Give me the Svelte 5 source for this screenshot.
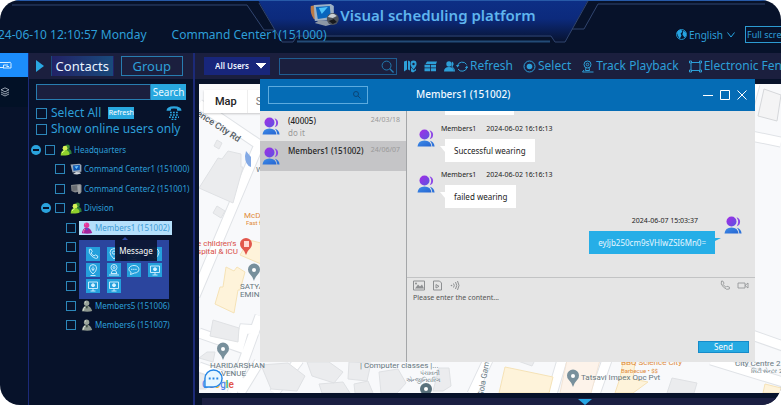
<script>
  const tree = [
    { level: 0, icon: 'group', label: 'Headquarters', open: true },
    { level: 1, icon: 'pc', label: 'Command Center1 (151000)' },
    { level: 1, icon: 'pcoff', label: 'Command Center2 (151001)' },
    { level: 1, icon: 'group', label: 'Division', open: true },
    { level: 2, icon: 'hot', label: 'Members1 (151002)', selected: true },
    { level: 2 },
    { level: 2 },
    { level: 2 },
    { level: 2, icon: 'off', label: 'Members5 (151006)' },
    { level: 2, icon: 'off', label: 'Members6 (151007)' }
  ];
  const actions = ['phone', 'pin', 'mic', 'pin', 'mic', 'person', 'chat', 'screen', 'screen', 'screen'];
  const threads = [
    { name: '(40005)', date: '24/03/18', last: 'do it' },
    { name: 'Members1 (151002)', date: '24/06/07', last: '', active: true }
  ];
  const messages = [
    { time: '2024-06-02 16:16:13', text: 'Successful wearing' },
    { time: '2024-06-02 16:16:13', text: 'failed wearing' }
  ];
  const roads =
    'M59 63L-4 212M0 249l40 14 5-18 15 1M33 309l28-77M0 20l62 42M60 278L41 309M100 276L75 309M0 283l47 17M289 276l-16 34M363 276l-10 34M408 276l-12 34M556 0l-24 90M582 58l-40-8M550 250l34 12M512 276l72 22';
</script>

{#snippet avatar()}
  <svg class="avatar" viewBox="0 0 18 18" aria-hidden="true">
    <defs>
      <linearGradient id="head" x1="0" y1="0" x2="1" y2="1">
        <stop offset="0" stop-color="#a52be6" /><stop offset="1" stop-color="#5a55e0" />
      </linearGradient>
      <linearGradient id="torso" x1="0" y1="0" x2="1" y2="1">
        <stop offset="0" stop-color="#3f8de8" /><stop offset="1" stop-color="#2565d2" />
      </linearGradient>
    </defs>
    <circle cx="7.5" cy="5.5" r="5" fill="url(#head)" />
    <path d="M12.5 1.2q3.6 1 3.6 4.5t-3.4 4.5q3-4.4-.2-9z" fill="#8d48e6" />
    <path d="M.5 17.5q.6-6 7-6t7 6z" fill="url(#torso)" />
    <path d="M13 11.8q4 1 4.6 5.7h-2.2q-.2-3.3-2.4-5.7z" fill="#2d73da" />
  </svg>
{/snippet}

{#snippet treeIcon(kind)}
  <svg class="tree-icon" viewBox="0 0 12 12" aria-hidden="true">
    {#if kind === 'group'}
      <circle cx="7.5" cy="3" r="2.4" fill="#3c8a35" /><path d="M4 10q0-5 4-5t3.5 5z" fill="#2f7f38" />
      <circle cx="5" cy="4.2" r="2.4" fill="#d7f255" /><path d="M.7 11.5q0-5.5 4.3-5.5t4.6 4.5q-2 1.3-8.9 1z" fill="#8fd02c" />
      <path d="M2.3 9q.5-2.2 2.5-2.3" stroke="#e6ff8a" fill="none" />
    {:else if kind === 'pc'}
      <path d="M.5 1.5l9-.8 1.9 1.2v6.8L2.5 9.5z" fill="#9aa6b5" />
      <path d="M3 2.6l6.8-.5v5l-6.3.6z" fill="#0b56b5" /><path d="M4.5 3.6l4-.6-2 3z" fill="#71c8ff" />
      <path d="M3 11l3-2 4 .2 1 1.3-4 1z" fill="#d3d8de" />
    {:else if kind === 'pcoff'}
      <path d="M1 2l9-1 1.5 1v7L10 11H8V9L5 9.500 1.500 8z" fill="#85888c" />
      <path d="M2 3l5-.5v5L2.500 8z" fill="#6a6d72" /><path d="M7.500 2.500l3-.5v7.500l-2 .5z" fill="#a3a5a8" />
    {:else}
      <circle cx="5.600" cy="3.200" r="2.700" fill={kind === 'hot' ? '#e2379b' : '#9aa49b'} />
      <path d="M.8 11.300q.8-5.600 4.800-5.600t5.600 5.300q-3.200 1.200-10.400.3z" fill={kind === 'hot' ? '#a3249b' : '#8d978e'} />
      <path d="M4.500 6.200L6 9l1-2.800z" fill={kind === 'hot' ? '#4752d9' : '#304238'} />
      <path d="M2.500 10.500q0-2.500 1.600-3.500M4 2.400l1-.8" stroke={kind === 'hot' ? '#ff75b4' : '#e6eee3'} fill="none" />
    {/if}
  </svg>
{/snippet}

{#snippet actionIcon(kind)}
  <svg viewBox="0 0 14 14" fill="none" stroke="#d9f3ff" stroke-width="0.9" aria-hidden="true">
    {#if kind === 'phone'}
      <path d="M3.4 2.4l1.7-.2 1.2 2.6-1.2 1.1q1 2 3 3.1l1.2-1.2 2.5 1.3-.3 1.9Q10 12.3 6 9.3 2 5.6 3.4 2.4z" />
    {:else if kind === 'pin'}
      <path d="M7 12Q3 8 3 5.6a4 4 0 0 1 8 0Q11 8 7 12z" /><circle cx="7" cy="5.6" r="1.6" />
    {:else if kind === 'mic'}
      <path d="M7 11Q3.4 8 3.4 5.2a3.6 3.6 0 0 1 7.2 0Q10.6 8 7 11zM7 3.5v4M5.5 5.5l1.5 2 1.5-2M4.5 12.500h5" />
    {:else if kind === 'person'}
      <circle cx="7" cy="4.5" r="3" /><circle cx="7" cy="4.5" r="1" /><path d="M5.5 7.5L4 10.5h6L8.5 7.5M2 12h10" />
    {:else if kind === 'chat'}
      <path d="M7 2.5c6.5 0 6.5 7.5.5 7.5l-4 1.5.6-2.2C0 7 2 2.5 7 2.5z" /><path d="M4 6.3h6" stroke-dasharray="1.5 .6" />
    {:else}
      <path d="M2.5 3h9v6.500h-9zM4.500 12h5M7 9.500V12" /><circle cx="7" cy="6.200" r="1.500" fill="#d9f3ff" />
    {/if}
  </svg>
{/snippet}

{#snippet place(x, y)}
  <g transform="translate({x} {y})">
    <path d="M0 0q-1-4-4.500-7.500a6 6 0 1 1 9 0Q1 -4 0 0z" fill="#78909c" /><circle cy="-11" r="2" fill="#fff" />
  </g>
{/snippet}

<div class="app">
  <header>
    <svg class="frame" viewBox="0 0 781 53" preserveAspectRatio="none" aria-hidden="true">
      <defs>
        <linearGradient id="banner" x1="0" y1="0" x2="0" y2="1">
          <stop offset="0" stop-color="#0d2f86" /><stop offset=".45" stop-color="#0c2a7c" /><stop offset="1" stop-color="#08132f" />
        </linearGradient>
      </defs>
      <path d="M258 0H588L565 42H555L551 37H297L293 42H282z" fill="url(#banner)" />
      <path d="M0 .5H781" stroke="#275aa8" />
      <g fill="none" stroke="#31456f">
        <path d="M12 5H247L264 30H275M259 3L282 42H293L297 36H551L555 42H565L588 1M572 29H584L598 4H765" />
        <path d="M297 41.5H550" stroke="#234b76" stroke-width="2" />
      </g>
    </svg>
    <time class="clock">24-06-10 12:10:57 Monday</time>
    <span class="center">Command Center1(151000)</span>
    <h1>
      <svg viewBox="0 0 30 22" aria-hidden="true">
        <path d="M1 2q-1 7 3 13l6 2L7 1z" fill="#bb7a45" />
        <path d="M4 1l17-1 3 2v12l-3 2-16 1z" fill="#9db0c4" />
        <path d="M6 3l14-1 1 11-13 2z" fill="#0865bd" /><path d="M9 4l9-1-6 7z" fill="#4ec3fa" />
        <path d="M5 19l5-3 12 1 1 3-7 2z" fill="#8d97a5" />
        <circle cx="23" cy="15" r="6" fill="#4d525a" /><path d="M18 13q4-6 9-1l-4 2z" fill="#cbd0d4" /><path d="M19 17l5-2 3 3-4 2z" fill="#17191e" />
      </svg>
      Visual scheduling platform
    </h1>
    <div class="head-tools">
      <button class="lang">
        <svg viewBox="0 0 12 12" aria-hidden="true"><circle cx="6" cy="6" r="5.4" fill="none" stroke="#26a5e3" /><path d="M1 4q2-4 5-3l1 2-2 2 1 2-2 4-2-4zM8 2l3 2v4L9 9 7 6z" fill="#26a5e3" /></svg>
        English
        <svg class="chev" viewBox="0 0 8 6" aria-hidden="true"><path d="M.5.5L4 5 7.5.5" fill="none" stroke="#26a5e3" /></svg>
      </button>
      <button class="full">Full screen</button>
    </div>
  </header>

  <div class="body">
    <nav aria-label="Main">
      <button class="on" aria-label="Dispatch"><svg viewBox="0 0 12 10" fill="none" stroke="#d8efff" aria-hidden="true"><path d="M0 2.500h8M0 7.500h3.500M3.500 8.500V5H8M8 2.500q3-1 3 1V8H4M6.500 6.500H9" /></svg></button>
      <button aria-label="Layers"><svg viewBox="0 0 12 10" fill="none" stroke="#bac5d0" stroke-width=".8" aria-hidden="true"><path d="M5 .8l4 2-4 2-4-2zM1 5l4 2 4-2M1 7l4 2 4-2" /></svg></button>
    </nav>

    <aside>
      <div class="tabs">
        <svg viewBox="0 0 8 12" aria-hidden="true"><path d="M0 0l8 6-8 6z" fill="#2aa8e2" /></svg>
        <button class="tab active">Contacts</button>
        <button class="tab">Group</button>
      </div>
      <form class="find">
        <input type="search" aria-label="Search contacts" /><button type="button">Search</button>
      </form>
      <div class="opts">
        <div class="opt">
          <label><input type="checkbox" />Select All</label>
          <button class="mini">Refresh</button>
          <svg class="dial" viewBox="0 0 16 14" aria-hidden="true">
            <path d="M.5 4.8q0-4.500 7.500-4.500t7.500 4.500h-4.200l-.5-2.100q-2.800-.6-5.600 0l-.5 2.100z" fill="#2ba5de" />
            <path d="M4 6.500h8M4 9h8M3 11.300h10M5.500 13.500h5" stroke="#2ba5de" stroke-width="1.400" stroke-dasharray="1.800 1.200" />
          </svg>
        </div>
        <label><input type="checkbox" />Show online users only</label>
      </div>
      <div class="tree">
        {#each tree as node, i}
          <div class="node l{node.level}">
            {#if node.open}<button class="fold" aria-label="Collapse {node.label}"></button>{/if}
            {#if node.label}
              <label>
                <input type="checkbox" />
                <span class:selected={node.selected} class="name">{@render treeIcon(node.icon)}{node.label}</span>
              </label>
            {:else}
              <input type="checkbox" aria-label="Contact {i}" />
            {/if}
          </div>
        {/each}
        <div class="actions">
          {#each actions as a, i}
            <button aria-label="Action {i + 1}">{@render actionIcon(a)}</button>
          {/each}
          <span class="tip" role="tooltip">Message</span>
        </div>
      </div>
    </aside>

    <main>
      <div class="toolbar">
        <select aria-label="User filter"><option>All Users</option></select>
        <label class="box">
          <input type="search" aria-label="Search map" />
          <svg viewBox="0 0 14 14" fill="none" stroke="#237eb5" aria-hidden="true"><circle cx="6" cy="6" r="4.8" /><path d="M9.500 9.500L13.500 13.500" stroke-width="1.400" /></svg>
        </label>
        <button aria-label="Map points" class="solo"><svg viewBox="0 0 13 12" aria-hidden="true"><path d="M0 1l3-1v9l-3 2zM4 0l2 1v9L4 9zM7 7l2 2 1 1 2-2v2l-3 2-2-1z" fill="#2d9fd8" /><path d="M9.500 9Q6 5 6.500 3a3 3 0 0 1 6 0Q13 5 9.500 9z" fill="#2d9fd8" /><circle cx="9.500" cy="3.500" r="1.200" fill="#1b1f3e" /></svg></button>
        <button aria-label="Grid" class="solo"><svg viewBox="0 0 13 12" aria-hidden="true"><path d="M3 1h10l-1 2.500H1.500zM.500 4.300H6v2.600H.500zM6.800 4.300H12v2.600H6.800zM.500 7.700H6v3H.500zM6.800 7.700H12v3H6.800z" fill="#2d9fd8" /></svg></button>
        <button><svg class="wide" viewBox="0 0 24 12" aria-hidden="true"><circle cx="5" cy="3.500" r="2.700" fill="#2d9fd8" /><path d="M0 11q0-4.500 5-4.500t5 4.500z" fill="#2d9fd8" /><path d="M8 1q3 2 .5 5 2 1.500 2.500 5h-1q0-3-2.500-5z" fill="#2d9fd8" /><path d="M13.500 5A5 5 0 0 1 22.500 4M23 7A5 5 0 0 1 14 8.500" fill="none" stroke="#2d9fd8" /><path d="M12 4.500h3.500l-2 2.500zM20.800 7.500h3.200l-1-2.500z" fill="#2d9fd8" /></svg>Refresh</button>
        <button><svg viewBox="0 0 13 12" aria-hidden="true"><circle cx="6.500" cy="6" r="5.500" fill="none" stroke="#2d9fd8" /><circle cx="6.500" cy="6" r="2.800" fill="#2d9fd8" /></svg>Select</button>
        <button><svg viewBox="0 0 13 12" fill="none" stroke="#2d9fd8" aria-hidden="true"><circle cx="6.500" cy="4" r="3.500" /><circle cx="6.500" cy="4" r="1.300" /><path d="M5 7l-.5 3h4L8 7M3 9.500L1.500 11.500h11" /></svg>Track Playback</button>
        <button><svg viewBox="0 0 13 12" fill="none" stroke="#2d9fd8" aria-hidden="true"><path d="M2 2h9v8H2z" /><path d="M.5.5h2v2h-2zM10.500.5h2v2h-2zM.5 9.500h2v2h-2zM10.500 9.500h2v2h-2z" fill="#1b1f3e" /></svg>Electronic Fence</button>
      </div>

      <div class="map">
        <svg class="tiles" viewBox="0 0 582 309" preserveAspectRatio="xMinYMin slice" aria-hidden="true">
          <rect width="582" height="309" fill="#f8f9fb" />
          <g fill="none" stroke="#e0e3e7" stroke-width="11"><path d={roads} /></g>
          <g fill="none" stroke="#fff" stroke-width="9"><path d={roads} /></g>
          <g fill="#ebecee" stroke="#dfe1e4">
            <path d="M29 67l13 3v13l2 0-10 36-34-15 19-30 4 1zM18 56l5 3-3 6-5-3zM18 122l8 5-4 7-8-5z" />
            <path d="M14 236l26 8-1 14-28-6zM8 268h8l-2 10-14-4zM0 289l10 3-3 13H0z" />
            <path d="M62 281l27-2 17 13-8 15-26-2zM108 278h22l14 10-9 11-22-7zM150 278l22 1-4 18-19-2zM120 300l24-2 7 11h-28zM155 300l14-3 5 12h-18zM180 288l19-3 8 14-9 10h-16z" />
            <path d="M240 284h10l2 18-8 5h-10zM316 276h20l-3 6zM473 294l25 5-3 10h-27z" />
          </g>
          <path d="M368 276h33l-9 33h-31z" fill="#fdf3ea" stroke="#f2e4d6" />
          <g fill="#fef3da" stroke="#f5e2b6">
            <path d="M27 183l8 4 3-4 8 5-5 18-2 0-4 23-19-9 5-17 3 0zM50 156l12 3v21l-21-9zM306 283l48 10-4 16h-50zM424 278h12l-2 17 15 3-15 11h-18l5-15zM566 300l16 4v5h-18z" />
          </g>
          <path d="M565 5l17 6-4 26-19-5z" fill="#f4f4f5" stroke="#d5d7da" />
          <path d="M46 72q0 9 6 11V73l-5-6z" fill="#83a9e5" />
          {@render place(24, 276)}
          {@render place(55, 197)}
          {@render place(374, 303)}
          <circle cx="227" cy="305" r="6" fill="#59717c" /><circle cx="227" cy="305" r="2" fill="#fff" />
          <path d="M47 171q-1-4-4.500-7a6 6 0 1 1 9 0Q48 167 47 171z" fill="#e2574c" /><path d="M45 157h5v6h-5z" fill="#ffd9d5" />
          <g class="place">
            <text class="street" transform="translate(-3 31) rotate(33)">ence City Rd</text>
            <text x="45" y="134" class="orange">McDonald's</text><text x="47" y="141" class="orange small">Fast food</text>
            <text x="-2" y="162" class="red">e children's</text><text x="-2" y="170" class="red">spital &amp; ICU</text>
            <text x="57" y="88" fill="#4a78c0">W</text>
            <text x="41" y="205">SATYAM</text><text x="41" y="213">EMINENCE</text>
            <text x="11" y="284">HARIDARSHAN</text><text x="17" y="292">AVENUE</text>
            <text x="161" y="284">| Computer classes |...</text>
            <text x="221" y="291" class="small">પંચાવતી</text><text x="207" y="298" class="small">એન્જીનિયરિંગ</text>
            <text transform="translate(284 313) rotate(-80)">Gola Gam</text>
            <text x="422" y="281" class="orange">BBQ Science City</text><text x="422" y="289" class="orange small">Barbecue • $$</text>
            <text x="382" y="296">Tatsavi Impex Opc Pvt</text>
            <text x="536" y="282">City Centre 2</text><text x="552" y="289" class="small">સિટી સેન્ટર 2</text>
          </g>
          <text class="google" x="3" y="304" fill="#5a8bea">G<tspan fill="#e45b50">o</tspan><tspan fill="#f2b52c">o</tspan><tspan fill="#4f86ea">g</tspan><tspan fill="#2da653">l</tspan><tspan fill="#e35449">e</tspan></text>
        </svg>
        <div class="kinds"><button>Map</button><button>Satellite</button></div>
        <button class="bubble-btn" aria-label="Open messages">
          <svg viewBox="0 0 20 20" aria-hidden="true"><path d="M1 19V10a9 9 0 1 1 9 9z" fill="#e8f7ff" stroke="#2486e6" stroke-width="1.500" /><path d="M5 10h2M9 10h2M13 10h2" stroke="#2486e6" stroke-width="2" /></svg>
        </button>

        <section class="dialog" aria-label="Messages">
          <div class="dlg-head">
            <label class="dlg-search">
              <input type="search" aria-label="Search conversations" />
              <svg viewBox="0 0 8 8" fill="none" stroke="#0a4577" aria-hidden="true"><circle cx="3" cy="3" r="2.500" /><path d="M5 5l2.500 2.500" /></svg>
            </label>
            <h2>Members1 (151002)</h2>
            <div class="win">
              <button aria-label="Minimize"><svg viewBox="0 0 12 12" stroke="#fff" aria-hidden="true"><path d="M1 6.500h10" /></svg></button>
              <button aria-label="Maximize"><svg viewBox="0 0 12 12" fill="none" stroke="#fff" aria-hidden="true"><path d="M1.500 1.500h9v9h-9z" /></svg></button>
              <button aria-label="Close"><svg viewBox="0 0 12 12" stroke="#fff" aria-hidden="true"><path d="M1.500 1.500l9 9M10.500 1.500l-9 9" /></svg></button>
            </div>
          </div>
          <div class="dlg-body">
            <div class="threads">
              {#each threads as t}
                <div class="thread" class:active={t.active}>
                  {@render avatar()}
                  <div><b>{t.name}</b><small>{t.last}</small></div>
                  <time>{t.date}</time>
                </div>
              {/each}
            </div>
            <div class="talk">
              <div class="log">
                <div class="sliver"></div>
                {#each messages as m}
                  <div class="msg">
                    {@render avatar()}
                    <div>
                      <div class="meta"><span>Members1</span><time>{m.time}</time></div>
                      <p>{m.text}</p>
                    </div>
                  </div>
                {/each}
                <div class="msg mine">
                  <div>
                    <div class="meta"><time>2024-06-07 15:03:37</time></div>
                    <p>eyJjb250cm9sVHlwZSI6Mn0=</p>
                  </div>
                  {@render avatar()}
                </div>
              </div>
              <div class="compose">
                <div class="kit">
                  <button aria-label="Image"><svg viewBox="0 0 12 10" aria-hidden="true"><path d="M.5.5h11v9H.5z" fill="none" stroke="#8e9092" /><path d="M2 8l3-4 2 2 2-2 2 4z" fill="#8e9092" /><circle cx="3" cy="3" r="1" fill="#8e9092" /></svg></button>
                  <button aria-label="Video file"><svg viewBox="0 0 12 10" fill="none" stroke="#8e9092" aria-hidden="true"><path d="M2.500.5h6l2 2v7h-8zM5 4v3.500l3-1.700z" /></svg></button>
                  <button aria-label="Voice"><svg viewBox="0 0 12 10" fill="none" stroke="#8e9092" aria-hidden="true"><path d="M4.500 3q1.500 2 0 4M6.500 1.500q2.500 3.500 0 7M8.500.5q3 4.500 0 9" /><circle cx="2.500" cy="5" r=".8" fill="#8e9092" stroke="none" /></svg></button>
                  <i></i>
                  <button aria-label="Call"><svg viewBox="0 0 12 10" fill="none" stroke="#8e9092" stroke-width=".8" aria-hidden="true"><path d="M2.500.5l1.500.2 1 2-1 1q1 2 3 3l1-1 2.500 1-.2 1.800Q8 10 4.500 6.700 1 3.500 2.500.5z" /></svg></button>
                  <button aria-label="Video call"><svg viewBox="0 0 12 10" fill="none" stroke="#8e9092" stroke-width=".8" aria-hidden="true"><path d="M1 2.500h7v5H1zM8 5l3-2.500v5z" /></svg></button>
                </div>
                <textarea aria-label="Message" placeholder="Please enter the content..."></textarea>
                <button class="send">Send</button>
              </div>
            </div>
          </div>
        </section>
      </div>
      <div class="dock"><button aria-label="Expand panel"></button></div>
    </main>
  </div>
</div>

<style>
  :global(body) { margin: 0; background: #fff; }
  .app, .app * { box-sizing: border-box; }
  .app { height: 100vh; display: flex; flex-direction: column; overflow: hidden; border-radius: 20px; background: #07122a; color: #2d9fd8; font-family: "Noto Sans", "Open Sans", sans-serif; font-size: 12px; line-height: 16px; }
  button, input, select, textarea { font: inherit; color: inherit; margin: 0; padding: 0; border: 0; border-radius: 0; background: none; outline: 0; }
  button { white-space: nowrap; flex: none; }
  svg { display: block; flex: none; }
  input[type='search'] { appearance: none; min-width: 0; }
  input[type='checkbox'] { appearance: none; flex: none; border: 1px solid #2c87ba; }

  header { position: relative; flex: none; height: 53px; display: flex; align-items: flex-end; padding-bottom: 10px; }
  .frame { position: absolute; inset: 0; width: 100%; height: 100%; }
  .clock, .center, .head-tools { position: relative; white-space: nowrap; }
  .clock { margin-left: -2px; }
  .center { margin-left: 25px; }
  h1 { position: absolute; top: 3px; left: 50%; transform: translateX(-50%); margin: 0 0 0 32px; display: flex; align-items: center; gap: 1px; font: 600 15px/24px "Noto Sans", "Open Sans", sans-serif; color: #5fb5ee; white-space: nowrap; }
  h1 svg { width: 30px; height: 22px; }
  .head-tools { margin-left: auto; display: flex; gap: 10px; align-items: center; margin-right: -20px; font-size: 10px; }
  .lang { display: flex; align-items: center; gap: 2px; }
  .lang svg { width: 11px; height: 11px; }
  .lang .chev { width: 8px; height: 6px; margin-left: 2px; }
  .full { width: 56px; height: 17px; border: 1px solid #2c9bd2; font-size: 9px; line-height: 15px; text-align: left; padding-left: 1px; }

  .body { flex: 1; min-height: 0; display: flex; }
  nav { width: 28px; flex: none; display: flex; flex-direction: column; }
  nav button { height: 30px; background: #021126; }
  nav .on { height: 24px; background: #1c8dfb; }
  nav svg { width: 12px; height: 10px; }
  aside { width: 167px; flex: none; border: solid #1c2a78; border-width: 0 2px 0 1px; display: flex; flex-direction: column; }
  .tabs { height: 26px; flex: none; display: flex; align-items: center; padding: 0 10px 0 7px; background: #1b1f3e; }
  .tabs svg { width: 8px; height: 12px; margin-right: 7px; }
  .tab { flex: 1; height: 20px; font-size: 13px; line-height: 18px; border: 1px solid #287db0; }
  .tab.active { color: #eaf4ff; background: linear-gradient(90deg, #222266, #194a7b); border-color: transparent; margin-right: 7px; }
  .find { display: flex; height: 16px; margin: 5px 7px 0; }
  .find input { flex: 1; background: #1b1f3e; border: 1px solid #287db0; }
  .find button { width: 35px; background: #28a8df; color: #e9f8ff; font-size: 10px; line-height: 16px; }
  .opts { margin: 5px 7px 0; }
  .opt { display: flex; align-items: center; }
  .opts label { display: flex; align-items: center; gap: 4px; white-space: nowrap; }
  .opts label input { width: 11px; height: 11px; }
  .mini { width: 26px; height: 12px; background: #28a8df; color: #fff; font-size: 7px; line-height: 12px; margin-left: 7px; }
  .dial { width: 16px; height: 14px; margin: 0 4px 0 auto; }
  .tree { position: relative; display: grid; grid-auto-rows: 1fr; height: 195px; margin-top: 3px; font-size: 8px; line-height: 14px; white-space: nowrap; }
  .node { display: flex; align-items: center; }
  .node label { display: flex; align-items: center; gap: 3px; }
  .node input { width: 10px; height: 10px; }
  .l0 { padding-left: 2px; }
  .l1 { padding-left: 26px; }
  .l1:has(.fold) { padding-left: 12px; }
  .l2 { padding-left: 37px; }
  .fold { width: 10px; height: 10px; border-radius: 50%; background: linear-gradient(#07122a, #07122a) center / 6px 2px no-repeat #2aa3dd; margin-right: 4px; }
  .name { display: flex; align-items: center; gap: 2px; padding-left: 2px; }
  .l2 .name { padding: 0 2px; }
  .name.selected { background: #b5e0fb; color: #3e9bd5; }
  .tree-icon { width: 12px; height: 12px; }
  .actions { position: absolute; left: 50px; top: 100px; width: 90px; height: 59px; padding: 7px; display: grid; grid-template-columns: repeat(4, 14px); justify-content: space-between; align-content: start; gap: 2px; background: #2b459e; }
  .actions button { height: 14px; background: #24a0dc; }
  .tip { position: absolute; left: 36px; top: 0; width: 42px; height: 21px; text-align: center; background: #0b1430ee; color: #fff; line-height: 21px; }
  .tip::before { content: ''; position: absolute; left: 7px; top: -3px; border: solid transparent; border-width: 0 3px 3px; border-bottom-color: #2a459c; }

  main { flex: 1; min-width: 0; display: flex; flex-direction: column; }
  .toolbar { height: 26px; flex: none; display: flex; align-items: center; background: #1b1f3e; padding-left: 9px; overflow: hidden; }
  .toolbar select { appearance: none; width: 66px; height: 18px; flex: none; padding-left: 11px; color: #eef5ff; font-size: 8px; font-weight: 600; background: linear-gradient(to bottom right, #fff 50%, transparent 51%) 57px 6px / 5px 6px no-repeat, linear-gradient(to bottom left, #fff 50%, transparent 51%) 52px 6px / 5px 6px no-repeat, #18267b; }
  .box { width: 118px; height: 17px; flex: none; margin: 0 7px 0 9px; display: flex; align-items: center; border: 1px solid #1f5d91; }
  .box input { flex: 1; }
  .box svg { margin-right: 2px; }
  .toolbar button { display: flex; align-items: center; gap: 2px; margin-right: 10px; }
  .toolbar .solo { margin-right: 7px; }
  .toolbar svg { width: 13px; height: 13px; }
  .toolbar .wide { width: 24px; }
  .map { position: relative; flex: 1; min-height: 0; margin: 5px 0 0 4px; }
  .tiles { position: absolute; inset: 0; width: 100%; height: 100%; }
  .place text { font-family: Roboto, "Noto Sans", sans-serif; font-size: 8px; fill: #667780; }
  .place .street { font-size: 9px; font-weight: 500; fill: #555c62; }
  .place .small { font-size: 6px; }
  .place .orange { fill: #e08a38; }
  .place .red { fill: #d94f48; }
  .google { font: 500 10px Roboto, sans-serif; }
  .kinds { position: absolute; left: 5px; top: 6px; display: flex; height: 23px; background: #fff; box-shadow: 0 1px 2px #0003; }
  .kinds button { padding: 0 10px 0 11px; font: 500 11px Roboto, sans-serif; color: #222; }
  .kinds button + button { color: #777; font-weight: 400; border-left: 1px solid #eee; padding-left: 8px; }
  .bubble-btn { position: absolute; left: 5px; bottom: 5px; }
  .bubble-btn svg { width: 19px; height: 19px; }

  .dialog { position: absolute; left: 61px; right: 26px; top: -5px; bottom: 31px; display: flex; flex-direction: column; background: #e5e5e5; color: #222; }
  .dlg-head { height: 32px; flex: none; display: flex; align-items: center; background: #056cb5; color: #f1f8ff; padding: 0 7px 0 8px; }
  .dlg-search { width: 100px; height: 18px; display: flex; align-items: center; border: 1px solid #5cabdf; }
  .dlg-search input { flex: 1; }
  .dlg-search svg { width: 8px; height: 8px; margin-right: 6px; }
  h2 { margin: 0 0 2px 48px; font-size: 10px; line-height: 16px; font-weight: 500; }
  .win { margin-left: auto; display: flex; gap: 5px; }
  .win svg { width: 12px; height: 12px; }
  .dlg-body { flex: 1; min-height: 0; display: flex; }
  .threads { width: 147px; flex: none; border-right: 1px solid #a4a6a8; }
  .thread { height: 30px; display: flex; align-items: center; padding: 0 6px 0 2px; gap: 8px; }
  .thread.active { background: #c5c5c7; }
  .thread div { flex: 1; display: flex; flex-direction: column; height: 26px; white-space: nowrap; }
  .thread b { font-size: 8px; line-height: 15px; font-weight: 500; }
  .thread small { font-size: 8px; line-height: 10px; color: #999; }
  .thread time { align-self: flex-start; font-size: 7px; line-height: 17px; color: #999; margin-left: -8px; }
  .avatar { width: 18px; height: 18px; }
  .talk { flex: 1; min-width: 0; display: flex; flex-direction: column; }
  .log { flex: 1; min-height: 0; overflow: hidden; border-bottom: 1px solid #c2c3c4; padding: 0 13px 0 10px; }
  .sliver { width: 69px; height: 4px; margin: 0 0 9px 28px; background: #fff; }
  .msg { display: flex; gap: 6px; height: 46px; }
  .msg > .avatar { margin-top: 5px; }
  .meta { display: flex; gap: 10px; font-size: 7px; line-height: 10px; height: 15px; }
  .msg p { position: relative; width: max-content; margin: 0 0 0 4px; padding: 0 9px; height: 23px; font-size: 8px; line-height: 23px; background: #fff; }
  .msg p::before { content: ''; position: absolute; left: -5px; top: 7px; border: solid transparent; border-width: 0 5px 6px 0; border-right-color: #fff; }
  .mine { justify-content: flex-end; gap: 9px; }
  .mine .meta { justify-content: flex-end; padding-right: 17px; }
  .mine p { margin: 0; background: #26aee7; color: #e5f6ff; }
  .mine p::before { left: auto; right: -6px; border-width: 6px 12px 0 0; border-color: #26aee7 transparent transparent; }
  .msg.mine > .avatar { margin-top: 0; }
  .compose { height: 84px; flex: none; display: flex; flex-direction: column; padding: 2px 6px 9px; }
  .kit { display: flex; gap: 6px; height: 11px; }
  .kit i { flex: 1; }
  .kit svg { width: 12px; height: 11px; }
  textarea { flex: 1; min-height: 0; resize: none; font-size: 7px; line-height: 14px; }
  textarea::placeholder { color: #555; opacity: 1; }
  .send { align-self: flex-end; width: 51px; height: 12px; background: #26aae2; border: 1px solid #168bc9; color: #fff; font-size: 8px; line-height: 10px; }
  .dock { height: 7px; flex: none; margin: 5px 0 0 7px; background: #1b1f42; display: flex; justify-content: center; }
  .dock button { border: solid transparent; border-width: 6px 7px 0; border-top-color: #26a5e3; align-self: flex-end; margin-left: 187px; }
</style>
